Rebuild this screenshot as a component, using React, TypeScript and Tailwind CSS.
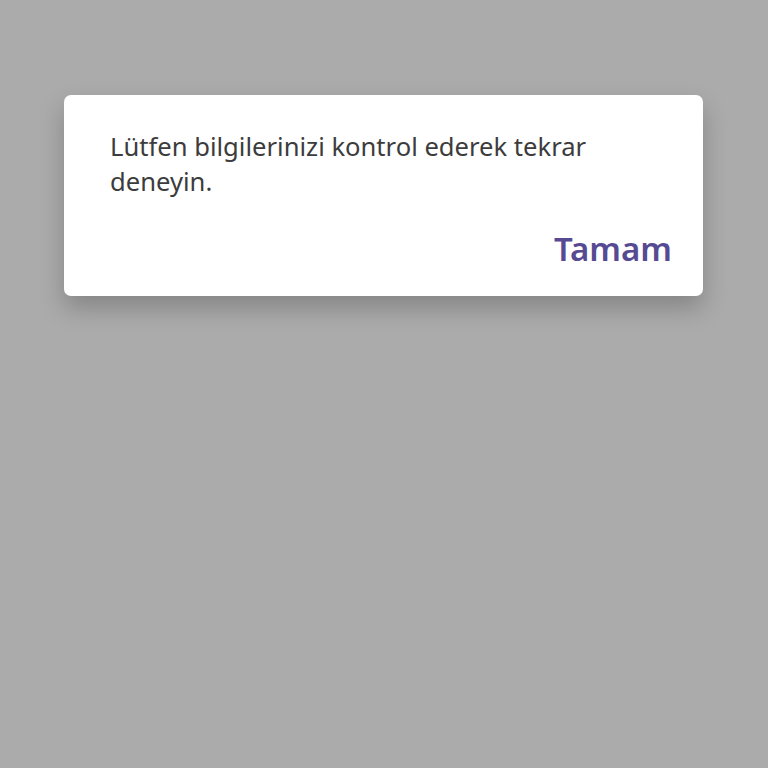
export default function App() {
  return (
    <div className="min-h-[768px] w-full bg-[#ababab] pt-[95px] px-[64px] font-['Noto_Sans',sans-serif]">
      <div className="w-[639px] h-[201px] bg-white rounded-[7px] shadow-[0_12px_24px_rgba(0,0,0,0.22)] flex flex-col pl-[46px] pr-[31px] pt-[34px]">
        <p className="max-w-[500px] text-[25.6px] leading-[35px] text-[#3c3c3c]">
          Lütfen bilgilerinizi kontrol ederek tekrar deneyin.
        </p>
        <div className="flex justify-end mt-[30px]">
          <button className="text-[33px] leading-[40px] font-semibold text-[#564a92]">
            Tamam
          </button>
        </div>
      </div>
    </div>
  );
}
